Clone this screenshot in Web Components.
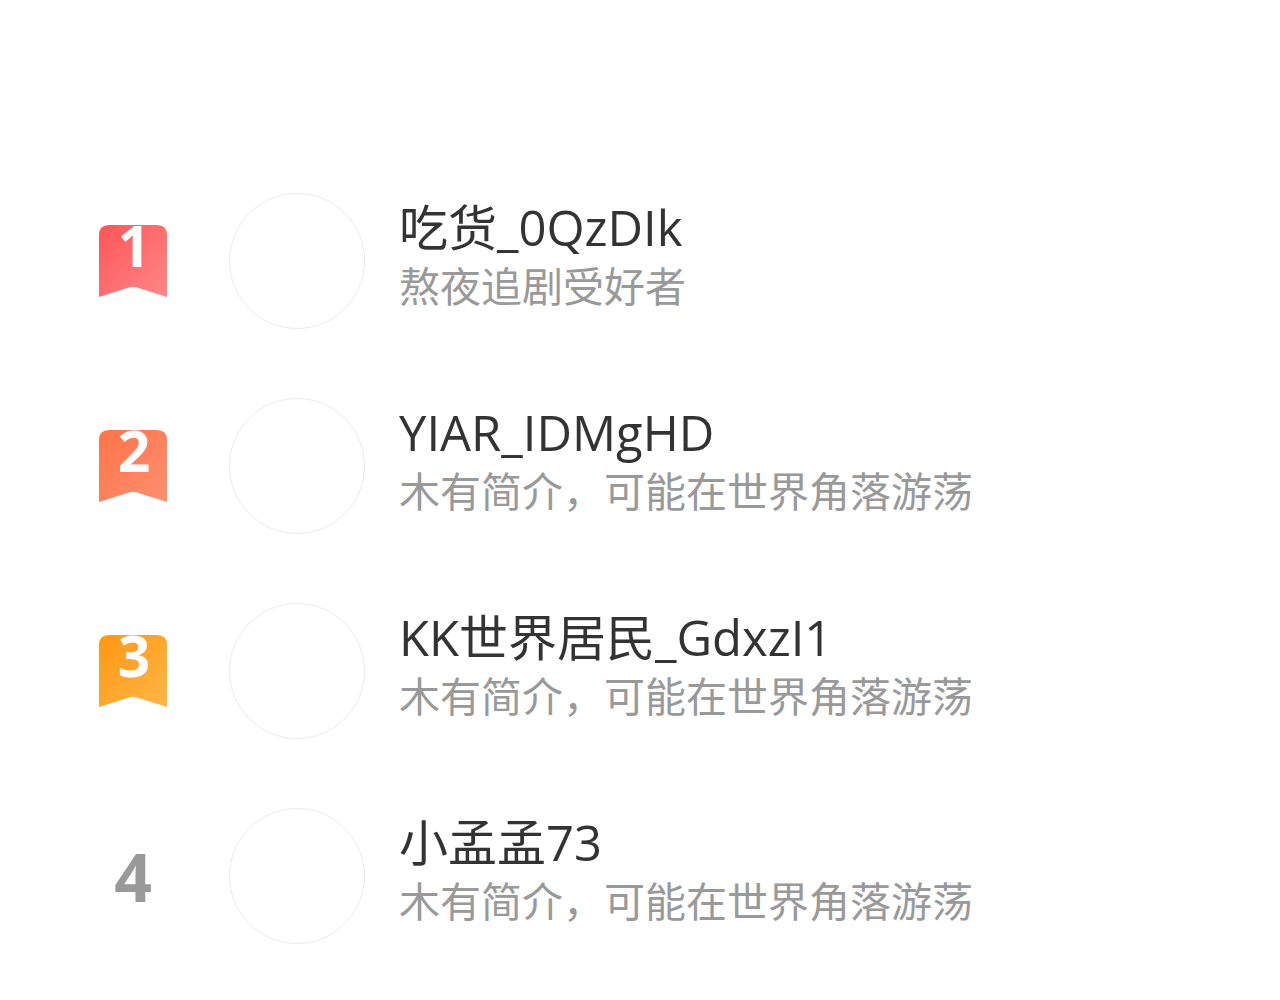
<!DOCTYPE html>
<html lang="zh-CN">
<head>
<meta charset="utf-8">
<meta name="viewport" content="width=device-width, initial-scale=1">
<title>排行榜</title>
<style>
  body { margin: 0; background: #fff; font-family: "Open Sans", "Noto Sans CJK SC", sans-serif; }
</style>
</head>
<body>
<rank-list>
  <rank-item rank="1"><span slot="name">吃货_0QzDIk</span><span slot="bio">熬夜追剧受好者</span></rank-item>
  <rank-item rank="2"><span slot="name">YIAR_IDMgHD</span><span slot="bio">木有简介，可能在世界角落游荡</span></rank-item>
  <rank-item rank="3"><span slot="name">KK世界居民_GdxzI1</span><span slot="bio">木有简介，可能在世界角落游荡</span></rank-item>
  <rank-item rank="4"><span slot="name">小孟孟73</span><span slot="bio">木有简介，可能在世界角落游荡</span></rank-item>
</rank-list>

<template id="list-template">
  <style>
    :host { display: block; padding: 159px 34px 0; }
    .list { display: flex; flex-direction: column; }
  </style>
  <div class="list" role="list"><slot></slot></div>
</template>

<template id="item-template">
  <style>
    :host { display: flex; align-items: center; padding: 34px 0 35px; }
    rank-badge { flex: none; box-sizing: border-box; width: 195px; padding-left: 3px; }
    .avatar { flex: none; box-sizing: border-box; width: 136px; height: 136px; border: 1px solid #ebebeb; border-radius: 50%; }
    .text { flex: 1; min-width: 0; padding-left: 34px; height: 136px; white-space: nowrap; }
    .name { font-size: 49px; line-height: 68px; color: #333; }
    .bio { font-size: 41px; line-height: 50px; color: #999; }
  </style>
  <rank-badge></rank-badge>
  <div class="avatar"></div>
  <div class="text">
    <div class="name"><slot name="name"></slot></div>
    <div class="bio"><slot name="bio"></slot></div>
  </div>
</template>

<template id="badge-template">
  <style>
    :host { display: block; font-weight: 700; text-align: center; color: #999; }
    .box { display: grid; justify-items: center; align-items: start; }
    .box > * { grid-area: 1 / 1; }
    svg { display: none; width: 70px; height: 72px; }
    .num { font-size: 66px; line-height: 72px; }
    :host([medal]) svg { display: block; }
    :host([medal]) .num { padding-left: 2px; color: #fff; font-size: 57px; line-height: 40px; }
  </style>
  <div class="box">
    <svg viewBox="0 0 70 72" aria-hidden="true">
      <defs>
        <linearGradient id="fill" x1="0" y1="0" x2="1" y2="1">
          <stop class="from" offset="0"/><stop class="to" offset="1"/>
        </linearGradient>
      </defs>
      <path d="M1 10Q1 0 11 0H59Q69 0 69 10V72L39 62.5Q35 61 31 62.5L1 72Z" fill="url(#fill)"/>
    </svg>
    <span class="num"></span>
  </div>
</template>

<script>
  const MEDALS = {
    1: ["#ff5558", "#ff8787"],
    2: ["#ff7447", "#ff8f70"],
    3: ["#ff9710", "#ffb647"]
  };

  function attach(host, id) {
    const root = host.attachShadow({ mode: "open" });
    root.append(document.getElementById(id).content.cloneNode(true));
    return root;
  }

  class RankBadge extends HTMLElement {
    static observedAttributes = ["value"];
    constructor() {
      super();
      attach(this, "badge-template");
    }
    attributeChangedCallback(name, old, value) {
      const colours = MEDALS[value];
      this.toggleAttribute("medal", Boolean(colours));
      this.shadowRoot.querySelector(".num").textContent = value;
      if (colours) {
        this.shadowRoot.querySelector(".from").setAttribute("stop-color", colours[0]);
        this.shadowRoot.querySelector(".to").setAttribute("stop-color", colours[1]);
      }
    }
  }

  class RankItem extends HTMLElement {
    constructor() {
      super();
      attach(this, "item-template");
    }
    connectedCallback() {
      this.setAttribute("role", "listitem");
      this.shadowRoot.querySelector("rank-badge").setAttribute("value", this.getAttribute("rank"));
    }
  }

  class RankList extends HTMLElement {
    constructor() {
      super();
      attach(this, "list-template");
    }
  }

  customElements.define("rank-badge", RankBadge);
  customElements.define("rank-item", RankItem);
  customElements.define("rank-list", RankList);
</script>
</body>
</html>
